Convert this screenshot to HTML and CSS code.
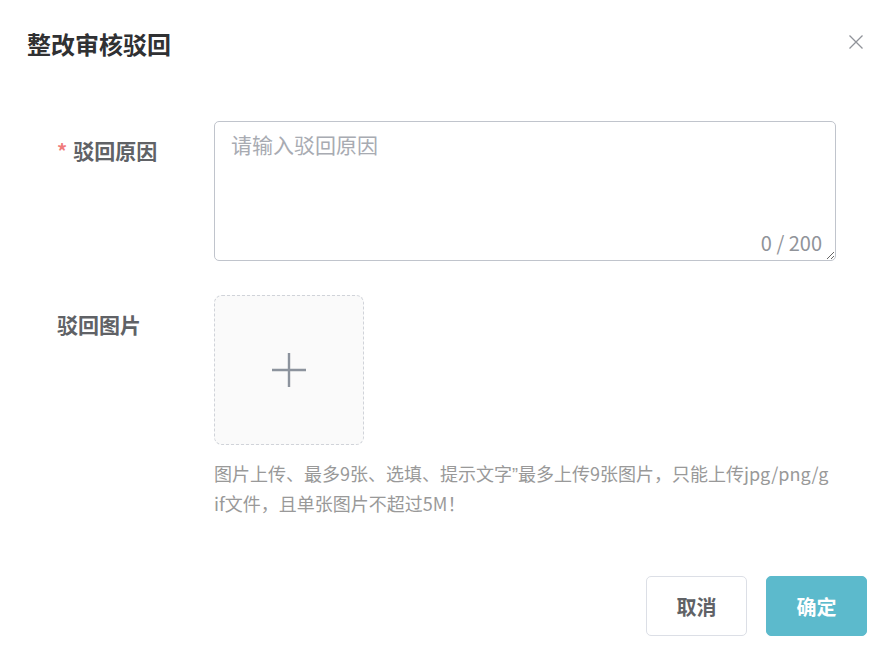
FILE: index.html
```html
<!DOCTYPE html>
<html lang="zh-CN">
<head>
<meta charset="utf-8">
<title>整改审核驳回</title>
<link rel="stylesheet" href="styles.css">
</head>
<body>
<div class="dialog">
  <div class="dialog-header">
    <span class="dialog-title">整改审核驳回</span>
    <button class="close-btn" aria-label="关闭">
      <svg width="16" height="16" viewBox="0 0 16 16"><path d="M1.5 1.5 L14.5 14.5 M14.5 1.5 L1.5 14.5" stroke="#909399" stroke-width="1.3" fill="none"/></svg>
    </button>
  </div>
  <div class="dialog-body">
    <div class="form-row">
      <label class="form-label form-label-reason"><span class="required">*</span>驳回原因</label>
      <div class="form-content">
        <div class="textarea-wrap">
          <textarea class="textarea" placeholder="请输入驳回原因"></textarea>
          <span class="counter">0 / 200</span>
        </div>
      </div>
    </div>
    <div class="form-row form-row-upload">
      <label class="form-label form-label-upload">驳回图片</label>
      <div class="form-content">
        <div class="upload-box">
          <svg width="36" height="36" viewBox="0 0 36 36"><path d="M18 1 V35 M1 18 H35" stroke="#8c939d" stroke-width="2.4" fill="none"/></svg>
        </div>
        <p class="hint">图片上传、最多9张、选填、提示文字<span class="quote">”</span>最多上传9张图片，只能上传jpg/png/gif文件，且单张图片不超过5M！</p>
      </div>
    </div>
  </div>
  <div class="dialog-footer">
    <button class="btn btn-cancel">取消</button>
    <button class="btn btn-primary">确定</button>
  </div>
</div>
</body>
</html>
```
FILE: styles.css
```css
* { box-sizing: border-box; }
html, body {
  margin: 0;
  padding: 0;
  background: #ffffff;
}
body {
  font-family: "Noto Sans CJK SC", "Noto Sans", sans-serif;
  width: 891px;
  height: 657px;
  overflow: hidden;
}
.dialog {
  width: 891px;
  height: 657px;
  display: flex;
  flex-direction: column;
}
.dialog-header {
  display: flex;
  justify-content: space-between;
  align-items: center;
  padding: 29px 27px 0 27px;
  height: 58px;
}
.dialog-title {
  font-size: 24px;
  font-weight: 700;
  color: #303133;
  line-height: 28px;
}
.close-btn {
  background: none;
  border: 0;
  padding: 0;
  width: 16px;
  height: 16px;
  display: flex;
  margin-top: -4px;
}
.dialog-body {
  padding: 63px 55px 0 57px;
}
.form-row {
  display: flex;
}
.form-row-upload {
  margin-top: 34px;
}
.form-label {
  width: 157px;
  flex: none;
  font-size: 21px;
  font-weight: 700;
  color: #606266;
  line-height: 28px;
}
.form-label-reason {
  padding-top: 15px;
}
.form-label-upload {
  padding-top: 15px;
}
.required {
  color: #f07b7b;
  margin-right: 6px;
  font-weight: 700;
  font-size: 20px;
}
.form-content {
  flex: 1;
}
.textarea-wrap {
  position: relative;
  width: 622px;
  height: 140px;
}
.textarea {
  display: block;
  width: 100%;
  height: 100%;
  border: 1px solid #c0c4cc;
  border-radius: 5px;
  padding: 6px 16px;
  font-family: "Noto Sans CJK SC", "Noto Sans", sans-serif;
  font-size: 21px;
  line-height: 32px;
  color: #606266;
  resize: vertical;
  outline: none;
}
.textarea::placeholder {
  color: #a8abb2;
}
.counter {
  position: absolute;
  right: 14px;
  bottom: 6px;
  font-size: 20px;
  color: #909399;
  line-height: 24px;
}
.upload-box {
  width: 150px;
  height: 150px;
  border: 1px dashed #d0d3d9;
  border-radius: 8px;
  background: #fafafa;
  display: flex;
  align-items: center;
  justify-content: center;
}
.hint {
  margin: 14px 0 0 0;
  width: 619px;
  font-size: 18px;
  line-height: 28px;
  color: #999999;
  word-break: break-all;
}
.quote {
  font-family: "Liberation Sans", sans-serif;
}
.dialog-footer {
  margin-top: auto;
  display: flex;
  justify-content: flex-end;
  gap: 19px;
  padding: 0 24px 21px 0;
}
.btn {
  width: 101px;
  height: 60px;
  border-radius: 5px;
  font-family: "Noto Sans CJK SC", "Noto Sans", sans-serif;
  font-size: 20px;
  font-weight: 700;
  padding: 0;
}
.btn-cancel {
  background: #ffffff;
  border: 1px solid #dcdfe6;
  color: #606266;
}
.btn-primary {
  background: #5cbacc;
  border: 1px solid #5cbacc;
  color: #ffffff;
}
```
